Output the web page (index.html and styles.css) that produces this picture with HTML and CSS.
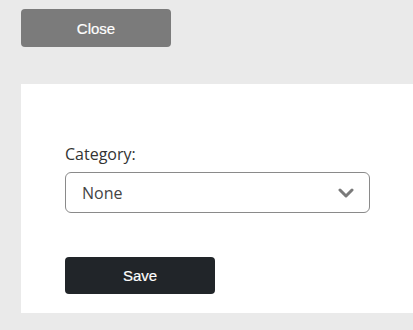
FILE: index.html
```html
<!DOCTYPE html>
<html>
<head>
<meta charset="utf-8">
<link rel="stylesheet" href="styles.css">
</head>
<body>
<div class="top">
  <button class="btn btn-close">Close</button>
</div>
<div class="panel">
  <label class="label">Category:</label>
  <div class="select">
    <span class="select-value">None</span>
    <svg class="chev" width="16" height="10" viewBox="0 0 16 10"><path d="M2 2 L8 8 L14 2" fill="none" stroke="#7a7a7a" stroke-width="3" stroke-linecap="round" stroke-linejoin="round"/></svg>
  </div>
  <button class="btn btn-save">Save</button>
</div>
</body>
</html>
```
FILE: styles.css
```css
html, body {
  margin: 0;
  padding: 0;
  background: #eaeaea;
  height: 330px;
  overflow: hidden;
}
.top {
  padding: 9px 0 0 21px;
  height: 84px;
  box-sizing: border-box;
}
.btn {
  display: block;
  width: 150px;
  border: none;
  border-radius: 4px;
  color: #fff;
  font-family: "Liberation Sans", Arial, sans-serif;
  font-size: 15px;
  font-weight: 400;
  padding: 0;
  cursor: pointer;
  -webkit-text-stroke: 0.2px #fff;
}
.btn-close {
  height: 38px;
  background: #7b7b7b;
}
.btn-save {
  height: 37px;
  background: #212529;
  margin-top: 44px;
}
.panel {
  margin-left: 21px;
  background: #fff;
  height: 229px;
  box-sizing: border-box;
  padding: 59px 0 0 44px;
  display: flex;
  flex-direction: column;
  align-items: flex-start;
}
.label {
  font-family: "Open Sans", sans-serif;
  font-size: 16px;
  line-height: 22px;
  color: #333;
  margin-bottom: 7px;
}
.select {
  width: 305px;
  height: 41px;
  box-sizing: border-box;
  border: 1px solid #8a8a8a;
  border-radius: 6px;
  display: flex;
  align-items: center;
  justify-content: space-between;
  padding: 0 15px 0 16px;
}
.select-value {
  font-family: "Open Sans", sans-serif;
  font-size: 16px;
  color: #444;
}
.chev {
  display: block;
}
```
